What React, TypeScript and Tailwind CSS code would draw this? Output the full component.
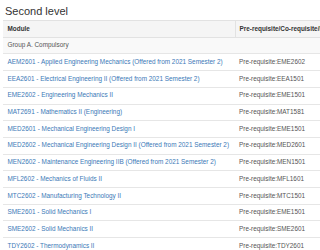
const rows = [
  ['AEM2601 - Applied Engineering Mechanics (Offered from 2021 Semester 2)', 'Pre-requisite:EME2602'],
  ['EEA2601 - Electrical Engineering II (Offered from 2021 Semester 2)', 'Pre-requisite:EEA1501'],
  ['EME2602 - Engineering Mechanics II', 'Pre-requisite:EME1501'],
  ['MAT2691 - Mathematics II (Engineering)', 'Pre-requisite:MAT1581'],
  ['MED2601 - Mechanical Engineering Design I', 'Pre-requisite:EME1501'],
  ['MED2602 - Mechanical Engineering Design II (Offered from 2021 Semester 2)', 'Pre-requisite:MED2601'],
  ['MEN2602 - Maintenance Engineering IIB (Offered from 2021 Semester 2)', 'Pre-requisite:MEN1501'],
  ['MFL2602 - Mechanics of Fluids II', 'Pre-requisite:MFL1601'],
  ['MTC2602 - Manufacturing Technology II', 'Pre-requisite:MTC1501'],
  ['SME2601 - Solid Mechanics I', 'Pre-requisite:EME1501'],
  ['SME2602 - Solid Mechanics II', 'Pre-requisite:SME2601'],
  ['TDY2602 - Thermodynamics II', 'Pre-requisite:TDY2601'],
]

export default function App() {
  return (
    <div className="w-[320px] h-[250px] overflow-hidden bg-white pl-[3px] font-['Liberation_Sans',Arial,sans-serif] text-[#555]">
      <h3 className="pt-[5px] pl-[2px] text-[11px] leading-[12px] text-[#333] mb-[3px]">
        Second level
      </h3>
      <table className="w-[420px] border-collapse text-[6.4px] leading-[8.7px] table-fixed">
        <colgroup>
          <col className="w-[232px]" />
          <col />
        </colgroup>
        <thead>
          <tr className="bg-[#f5f5f5] border-t border-b border-[#e2e2e2]">
            <th className="text-left font-bold text-[#333] px-[4.5px] py-[3.5px] whitespace-nowrap">
              Module
            </th>
            <th className="text-left font-bold text-[#333] px-[4px] py-[3.5px] border-l border-[#e2e2e2] whitespace-nowrap">
              Pre-requisite/Co-requisite/Recommended
            </th>
          </tr>
        </thead>
        <tbody>
          <tr className="bg-[#f9f9f9] border-b border-[#e6e6e6]">
            <td className="px-[4.5px] py-[3.5px] whitespace-nowrap">Group A. Compulsory</td>
            <td className="px-[4px] py-[3.5px]"></td>
          </tr>
          {rows.map(([mod, pre]) => (
            <tr key={mod} className="border-b border-[#e6e6e6]">
              <td className="px-[4.5px] py-[3.5px] whitespace-nowrap text-[#3b79b7]">{mod}</td>
              <td className="px-[4px] py-[3.5px] whitespace-nowrap">{pre}</td>
            </tr>
          ))}
        </tbody>
      </table>
    </div>
  )
}
